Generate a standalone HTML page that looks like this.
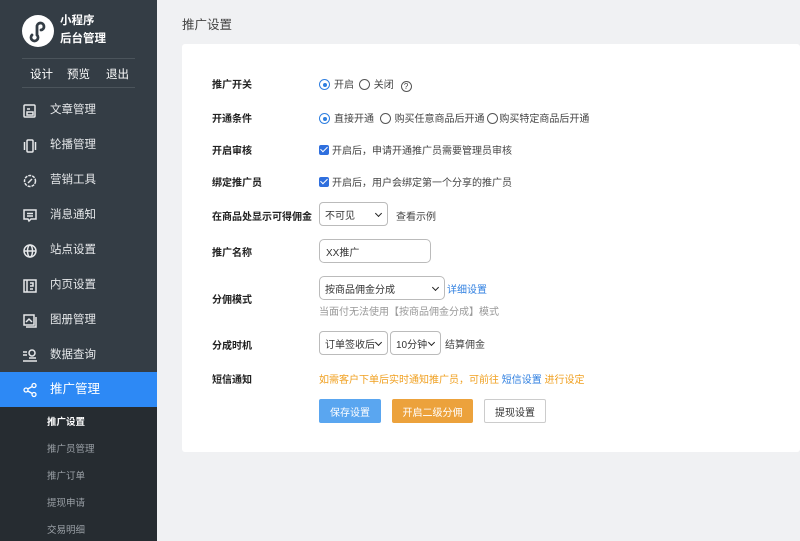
<!DOCTYPE html>
<html><head><meta charset="utf-8"><style>
*{margin:0;padding:0;box-sizing:border-box}
body{width:800px;height:541px;overflow:hidden;background:#f0f1f3;font-family:"Liberation Sans","Noto Sans CJK SC",sans-serif;position:relative}
.a{position:absolute;white-space:nowrap}
#sb{position:absolute;left:0;top:0;width:157px;height:541px;background:#343d45}
.mi{position:absolute;left:0;width:157px;height:35px;color:#e6e8ea;font-size:11.5px;line-height:35px;padding-left:50px}
.mi svg{position:absolute;left:22px;top:10px}
.sub{position:absolute;left:0;top:407px;width:157px;height:134px;background:#262c31}
.si{position:absolute;left:47px;font-size:9.5px;color:#9aa0a6}
.lab{position:absolute;left:212px;font-size:10px;color:#222;font-weight:bold;white-space:nowrap}
.t{position:absolute;font-size:10px;color:#444;white-space:nowrap}
.rad{display:inline-block;width:11px;height:11px;border:1px solid #555;border-radius:50%;vertical-align:-2px;margin-right:4px;position:relative}
.rad.on{border-color:#2f7fe0}
.rad.on:after{content:"";position:absolute;left:2.5px;top:2.5px;width:4px;height:4px;border-radius:50%;background:#2f7fe0}
.cb{display:inline-block;width:10px;height:10px;background:#2f6fde;border-radius:2px;vertical-align:-1px;margin-right:3px;position:relative}
.cb:after{content:"";position:absolute;left:3px;top:0px;width:3px;height:6px;border:solid #fff;border-width:0 1.5px 1.5px 0;transform:rotate(45deg)}
.sel{position:absolute;border:1px solid #bbb;border-radius:4px;background:#fff;font-size:10px;color:#333;padding-left:5px;height:24px;white-space:nowrap;display:flex;align-items:center}
.sel.d:after{content:"";position:absolute;right:6px;top:8px;width:4px;height:4px;border:solid #222;border-width:0 1.5px 1.5px 0;transform:rotate(45deg)}
.btn{position:absolute;top:399px;height:24px;font-size:10px;border-radius:2px;display:flex;align-items:center;justify-content:center}
</style></head><body>
<div id="sb">
<div class="a" style="left:22px;top:15px;width:32px;height:32px;border-radius:50%;background:#fff"></div>
<svg class="a" style="left:22px;top:15px" width="32" height="32" viewBox="0 0 32 32"><path d="M10 20a3.5 3.5 0 1 0 5 0V12a3.5 3.5 0 1 1 4 3" fill="none" stroke="#343d45" stroke-width="2.8" stroke-linecap="round"/></svg>
<div class="a" style="left:60px;top:12px;color:#fff;font-size:11.5px;font-weight:bold;line-height:18px">小程序<br>后台管理</div>
<div class="a" style="left:22px;top:58px;width:113px;height:1px;background:#4b545b"></div>
<div class="a" style="left:30px;top:66px;color:#fff;font-size:11.5px">设计</div>
<div class="a" style="left:67px;top:66px;color:#fff;font-size:11.5px">预览</div>
<div class="a" style="left:106px;top:66px;color:#fff;font-size:11.5px">退出</div>
<div class="a" style="left:22px;top:87px;width:113px;height:1px;background:#4b545b"></div>
<div class="mi" style="top:93px"><svg width="16" height="16" viewBox="0 0 16 16" fill="none" stroke="#e6e8ea" stroke-width="1.5"><rect x="2" y="2" width="11" height="12" rx="1"/><path d="M5 6h3M5 9h6v3H5z"/></svg>文章管理</div>
<div class="mi" style="top:128px"><svg width="16" height="16" viewBox="0 0 16 16" fill="none" stroke="#e6e8ea" stroke-width="1.5"><rect x="5" y="2" width="6" height="12" rx="1"/><path d="M2.5 4v8M13.5 4v8"/></svg>轮播管理</div>
<div class="mi" style="top:163px"><svg width="16" height="16" viewBox="0 0 16 16" fill="none" stroke="#e6e8ea" stroke-width="1.5"><circle cx="8" cy="8" r="5.5" stroke-dasharray="3 1"/><path d="M6 10l4-4"/></svg>营销工具</div>
<div class="mi" style="top:198px"><svg width="16" height="16" viewBox="0 0 16 16" fill="none" stroke="#e6e8ea" stroke-width="1.5"><path d="M2 2h12v9H9l-2 2-1-2H2z"/><path d="M5 5.5h6M5 8h6"/></svg>消息通知</div>
<div class="mi" style="top:233px"><svg width="16" height="16" viewBox="0 0 16 16" fill="none" stroke="#e6e8ea" stroke-width="1.5"><circle cx="8" cy="8" r="6"/><ellipse cx="8" cy="8" rx="2.5" ry="6"/><path d="M2 8h12"/></svg>站点设置</div>
<div class="mi" style="top:268px"><svg width="16" height="16" viewBox="0 0 16 16" fill="none" stroke="#e6e8ea" stroke-width="1.5"><rect x="2" y="2" width="12" height="12"/><path d="M5 2v12M8 5h3v3H8M8 11h3"/></svg>内页设置</div>
<div class="mi" style="top:303px"><svg width="16" height="16" viewBox="0 0 16 16" fill="none" stroke="#e6e8ea" stroke-width="1.5"><rect x="2" y="2" width="10" height="10"/><path d="M4 14h10V4M4 9l3-3 3 3"/></svg>图册管理</div>
<div class="mi" style="top:338px"><svg width="16" height="16" viewBox="0 0 16 16" fill="none" stroke="#e6e8ea" stroke-width="1.5"><path d="M1 4h4M1 7h4M1 13h14"/><circle cx="10" cy="5" r="3"/><path d="M7 10h7"/></svg>数据查询</div>
<div class="mi" style="top:372px;background:#2d89f5;color:#fff;font-size:12.5px;height:35px"><svg width="16" height="16" viewBox="0 0 16 16" fill="none" stroke="#fff" stroke-width="1.3"><circle cx="4" cy="8" r="2"/><circle cx="12" cy="3.5" r="2"/><circle cx="12" cy="12.5" r="2"/><path d="M5.7 7l4.6-2.5M5.7 9l4.6 2.5"/></svg>推广管理</div>
<div class="sub">
<div class="si" style="top:7px;color:#fff;font-weight:bold">推广设置</div>
<div class="si" style="top:34px">推广员管理</div>
<div class="si" style="top:61px">推广订单</div>
<div class="si" style="top:88px">提现申请</div>
<div class="si" style="top:115px">交易明细</div>
</div>
</div>
<div class="a" style="left:182px;top:14px;font-size:12.5px;color:#444">推广设置</div>
<div class="a" style="left:182px;top:44px;width:618px;height:408px;background:#fff;border-radius:3px"></div>

<div class="lab" style="top:76px">推广开关</div>
<div class="t" style="left:319px;top:76px"><span class="rad on"></span>开启 <span class="rad" style="margin-left:2px"></span>关闭 <span class="rad" style="margin-left:4px;text-align:center;font-size:8px;line-height:9px;vertical-align:-1px">?</span></div>
<div class="lab" style="top:110px">开通条件</div>
<div class="t" style="left:319px;top:110px"><span class="rad on"></span>直接开通 &nbsp;<span class="rad"></span>购买任意商品后开通 <span class="rad" style="margin-right:1px"></span>购买特定商品后开通</div>
<div class="lab" style="top:142px">开启审核</div>
<div class="t" style="left:319px;top:142px"><span class="cb"></span>开启后，申请开通推广员需要管理员审核</div>
<div class="lab" style="top:174px">绑定推广员</div>
<div class="t" style="left:319px;top:174px"><span class="cb"></span>开启后，用户会绑定第一个分享的推广员</div>
<div class="lab" style="top:208px">在商品处显示可得佣金</div>
<div class="sel d" style="left:319px;top:202px;width:69px">不可见</div>
<div class="t" style="left:396px;top:208px">查看示例</div>
<div class="lab" style="top:244px">推广名称</div>
<div class="sel" style="left:319px;top:239px;width:112px;border-radius:5px;padding-left:6px">XX推广</div>
<div class="sel d" style="left:319px;top:276px;width:126px;border-radius:5px">按商品佣金分成</div>
<div class="t" style="left:447px;top:281px;color:#2f7fe0">详细设置</div>
<div class="lab" style="top:291px">分佣模式</div>
<div class="t" style="left:319px;top:303px;color:#999">当面付无法使用【按商品佣金分成】模式</div>
<div class="lab" style="top:337px">分成时机</div>
<div class="sel d" style="left:319px;top:331px;width:69px">订单签收后</div>
<div class="sel d" style="left:390px;top:331px;width:51px">10分钟</div>
<div class="t" style="left:445px;top:336px">结算佣金</div>
<div class="lab" style="top:371px">短信通知</div>
<div class="t" style="left:319px;top:371px;color:#f0a020">如需客户下单后实时通知推广员，可前往 <span style="color:#2f7fe0">短信设置</span> 进行设定</div>
<div class="btn" style="left:319px;width:62px;background:#5aa6f0;color:#fff">保存设置</div>
<div class="btn" style="left:392px;width:81px;background:#eca23c;color:#fff">开启二级分佣</div>
<div class="btn" style="left:484px;width:62px;border:1px solid #ccc;color:#333;background:#fff">提现设置</div>
</body></html>
